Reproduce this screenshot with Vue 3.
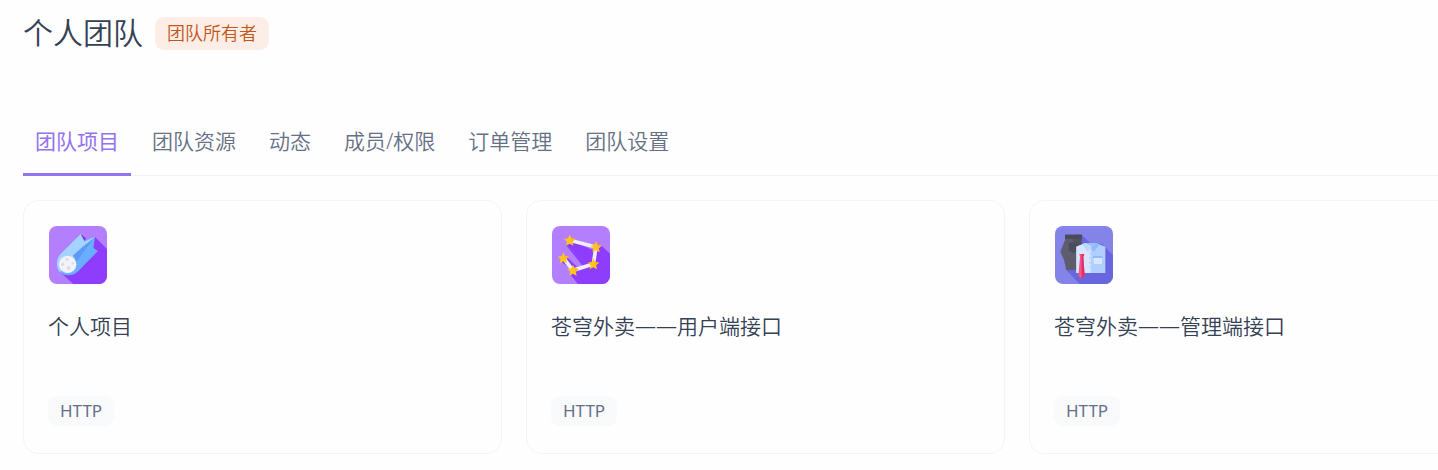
<script setup>
import { ref } from 'vue'

const tabs = ['团队项目', '团队资源', '动态', '成员/权限', '订单管理', '团队设置']
const active = ref(0)

const projects = [
  { name: '个人项目', icon: 'comet', type: 'HTTP' },
  { name: '苍穹外卖——用户端接口', icon: 'stars', type: 'HTTP' },
  { name: '苍穹外卖——管理端接口', icon: 'clothes', type: 'HTTP' },
]

const stars = [[80, 73], [159, 93], [151, 144], [90, 163], [61, 126]]
const starPoints = '0,-17 5,-6 17,-4 8,4 11,16 0,10 -11,16 -8,4 -17,-4 -5,-6'
</script>

<template>
  <main class="page">
    <header class="head">
      <h1 class="title">个人团队</h1>
      <span class="role">团队所有者</span>
    </header>

    <nav class="tabs" role="tablist">
      <button
        v-for="(tab, i) in tabs"
        :key="tab"
        type="button"
        role="tab"
        class="tab"
        :class="{ active: i === active }"
        :aria-selected="i === active"
        @click="active = i"
      >{{ tab }}</button>
    </nav>

    <section class="grid">
      <article v-for="p in projects" :key="p.name" class="card">
        <div class="icon">
          <svg v-if="p.icon === 'comet'" viewBox="27 30 174 174" aria-hidden="true">
            <rect x="27" y="30" width="174" height="174" fill="#b37fff" />
            <path d="M165 63L201 99V204H100L61 169L120 110Z" fill="#8f3dfc" />
            <path d="M122 54L127 66L130 76L165 62L160 96L174 105L112 168C97 181 72 181 60 169C48 156 48 136 60 120Z" fill="#6aaeff" />
            <path d="M122 54L134 70L132 77L165 62L105 120L60 169C48 156 48 134 58 118Z" fill="#a5d3ff" />
            <path d="M122 54L138 67L133 75Z" fill="#7a38d8" />
            <path d="M163 65L137 99L110 137C107 128 103 122 98 119L130 91Z" fill="#5b9bf8" />
            <circle cx="83" cy="145" r="26" fill="#f2f2f8" />
            <g fill="#dcdce8">
              <circle cx="81" cy="130" r="5" />
              <circle cx="68" cy="145" r="5" />
              <circle cx="86" cy="156" r="6" />
              <circle cx="99" cy="142" r="4" />
            </g>
          </svg>

          <svg v-else-if="p.icon === 'stars'" viewBox="27 30 174 174" aria-hidden="true">
            <rect x="27" y="30" width="174" height="174" fill="#b37fff" />
            <path d="M68 86L94 78L158 106L176 89L201 113V204H105L80 174L90 163L53 136L72 123L105 155L137 147Z" fill="#8f3dfc" />
            <path d="M68 86L138 147L121 152Z" fill="#8f3dfc" />
            <polyline points="80,73 159,93 151,144 90,163 61,126" fill="none" stroke="#f0eff8" stroke-width="11" />
            <g v-for="([x, y], i) in stars" :key="i" :transform="`translate(${x} ${y})`">
              <polygon :points="starPoints" fill="#ffc51b" />
              <path d="M0-17L5-6L17-4L8 4L11 16Z" fill="#ffb125" />
            </g>
          </svg>

          <svg v-else viewBox="27 30 174 174" aria-hidden="true">
            <rect x="27" y="30" width="174" height="174" fill="#8483e7" />
            <path d="M107 56L139 87L168 84L201 118V204H101L61 162Z" fill="#6766df" />
            <path d="M57 56H107V162H61L54 132L43 107L57 72Z" fill="#5d5d6e" />
            <path d="M82 56H107V162H93V110L82 104Z" fill="#515162" />
            <path d="M57 56H107V68H57Z" fill="#494958" />
            <path d="M68 80H94V104L83 111L68 104Z" fill="#4c4c5b" />
            <path d="M91 92L118 81H149L178 92V171H91Z" fill="#b0cfff" />
            <path d="M91 92L118 81L134 89V171H91Z" fill="#d8e7ff" />
            <path d="M118 81H149L134 91Z" fill="#9ac0fa" />
            <path d="M118 81L134 95L126 108L109 87Z" fill="#bcd6ff" />
            <path d="M149 81L134 95L143 108L160 86Z" fill="#8ebcff" />
            <path d="M141 120H169V126H141Z" fill="#8ebcff" />
            <path d="M143 126H168V144H143Z" fill="#d8e7ff" />
            <g fill="#9fc3f7">
              <circle cx="131" cy="112" r="2" />
              <circle cx="131" cy="126" r="2" />
              <circle cx="131" cy="140" r="2" />
              <circle cx="131" cy="154" r="2" />
            </g>
            <path d="M100 114H115L112 123L116 179L107 188L97 179L102 123Z" fill="#f85584" />
            <path d="M107 114H115L112 123L116 179L107 188Z" fill="#dc316b" />
          </svg>
        </div>
        <h2 class="name">{{ p.name }}</h2>
        <span class="tag">{{ p.type }}</span>
      </article>
    </section>
  </main>
</template>

<style>
body {
  background: #fefefe;
}
</style>

<style scoped>
.page {
  box-sizing: border-box;
  padding: 12px 0 16px 23px;
  overflow: hidden;
  color: #344054;
  font-family: "Noto Sans", "Noto Sans CJK SC", sans-serif;
  font-weight: 350;
}

.head {
  display: flex;
  align-items: center;
  gap: 12px;
}

.title {
  margin: 0;
  font-size: 30px;
  font-weight: 350;
  line-height: 42px;
}

.role {
  padding: 0 12px;
  border-radius: 9px;
  background: #fceee6;
  color: #c4561a;
  font-size: 18px;
  line-height: 33px;
}

.tabs {
  display: flex;
  gap: 9px;
  margin-top: 54px;
  box-shadow: inset 0 -1px #f2f3f5;
}

.tab {
  padding: 2px 12px 1px;
  border: 0;
  border-bottom: 3px solid transparent;
  border-radius: 3px 3px 0 0;
  background: none;
  color: #667085;
  font: inherit;
  font-size: 21px;
  line-height: 62px;
  white-space: nowrap;
  cursor: pointer;
}

.tab.active {
  border-bottom-color: #9373ee;
  color: #9373ee;
  font-weight: 400;
}

.grid {
  display: grid;
  grid-template-columns: repeat(3, minmax(479px, 1fr));
  gap: 24px;
  margin-top: 24px;
}

.card {
  display: flex;
  flex-direction: column;
  align-items: flex-start;
  box-sizing: border-box;
  padding: 24px 24px 27px;
  border: 1px solid #f3f4f6;
  border-radius: 15px;
}

.icon {
  padding: 1px;
}

.icon svg {
  display: block;
  width: 58px;
  height: 58px;
  border-radius: 8px;
}

.name {
  margin: 24px 0 53px;
  font-size: 21px;
  font-weight: 350;
  line-height: 34px;
}

.tag {
  padding: 0 12px;
  border-radius: 9px;
  background: #f9fafc;
  color: #667085;
  font-size: 17px;
  font-weight: 400;
  line-height: 30px;
}
</style>
